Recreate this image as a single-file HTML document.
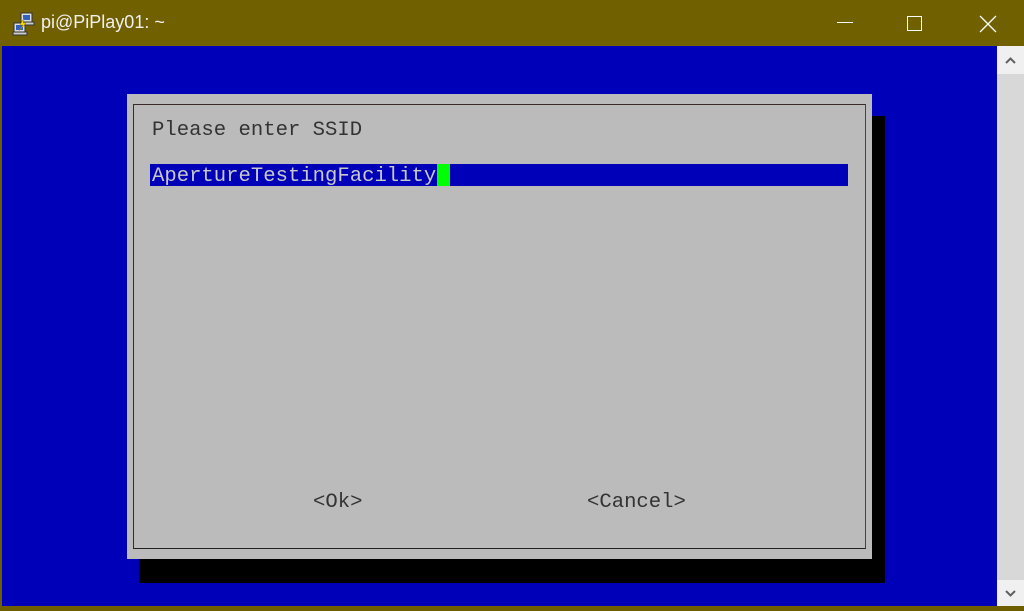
<!DOCTYPE html>
<html><head><meta charset="utf-8"><style>
*{margin:0;padding:0;box-sizing:border-box}
body{width:1024px;height:608px;overflow:hidden;background:#6f5e00;position:relative;font-family:"Liberation Sans",sans-serif}
.title{position:absolute;left:0;top:0;width:1024px;height:46px;background:#706000}
.title .t{position:absolute;left:41px;top:12px;color:#f0f0f0;font-size:18px}
.term{position:absolute;left:2px;top:46px;width:995px;height:560px;background:#0000b8}
.sb{position:absolute;left:997px;top:46px;width:27px;height:560px;background:#d8d8d8}
.sbb{position:absolute;left:0;width:27px;height:28px;background:#f0f0f0}
.mono{font-family:"Liberation Mono",monospace;font-size:20.6px;position:absolute;white-space:pre;line-height:24px}
</style></head><body>
<div class="title">
<svg style="position:absolute;left:12px;top:12px" width="24" height="24" viewBox="0 0 24 24">
<rect x="9" y="1" width="11" height="9" fill="#ddd" stroke="#333"/><rect x="11" y="3" width="7" height="5" fill="#3060c0"/>
<rect x="2" y="11" width="11" height="9" fill="#ddd" stroke="#333"/><rect x="4" y="13" width="7" height="5" fill="#3060c0"/>
<rect x="1" y="20" width="14" height="3" fill="#ccc" stroke="#333"/><rect x="10" y="10" width="12" height="3" fill="#ccc" stroke="#333"/>
<path d="M12 6 L8 13 L11 13 L7 19 L14 11 L11 11 Z" fill="#ffe800" stroke="#a08000" stroke-width=".5"/></svg>
<div class="t">pi@PiPlay01: ~</div>
<div style="position:absolute;left:837px;top:22px;width:16px;height:1px;background:#fff"></div>
<div style="position:absolute;left:907px;top:16px;width:15px;height:15px;border:1px solid #fff"></div>
<svg style="position:absolute;left:979px;top:15px" width="18" height="18"><path d="M1 1L17 17M17 1L1 17" stroke="#fff" stroke-width="1.3"/></svg>
</div>
<div class="term"></div>
<div class="sb">
<div class="sbb" style="top:0"><svg width="27" height="28"><path d="M9 17L13.5 12.5L18 17" stroke="#606060" stroke-width="2" fill="none"/></svg></div>
<div class="sbb" style="top:534px;height:26px"><svg width="27" height="26"><path d="M9 11L13.5 15.5L18 11" stroke="#606060" stroke-width="2" fill="none"/></svg></div>
</div>
<div style="position:absolute;left:139px;top:116px;width:746px;height:467px;background:#000"></div>
<div style="position:absolute;left:127px;top:94px;width:745px;height:465px;background:#bbbbbb"></div>
<div style="position:absolute;left:133px;top:104px;width:733px;height:445px;border:1px solid #3a2a2a;border-right-color:#444;border-bottom-color:#222"></div>
<div class="mono" style="left:152px;top:119px;color:#333">Please enter SSID</div>
<div style="position:absolute;left:150px;top:164px;width:698px;height:22px;background:#0000b8"></div>
<div style="position:absolute;left:437px;top:164px;width:13px;height:22px;background:#00ff00"></div>
<div class="mono" style="left:152px;top:165px;color:#c8c8c8">ApertureTestingFacility</div>
<div class="mono" style="left:313px;top:491px;color:#333">&lt;Ok&gt;</div>
<div class="mono" style="left:587px;top:491px;color:#333">&lt;Cancel&gt;</div>
</body></html>
